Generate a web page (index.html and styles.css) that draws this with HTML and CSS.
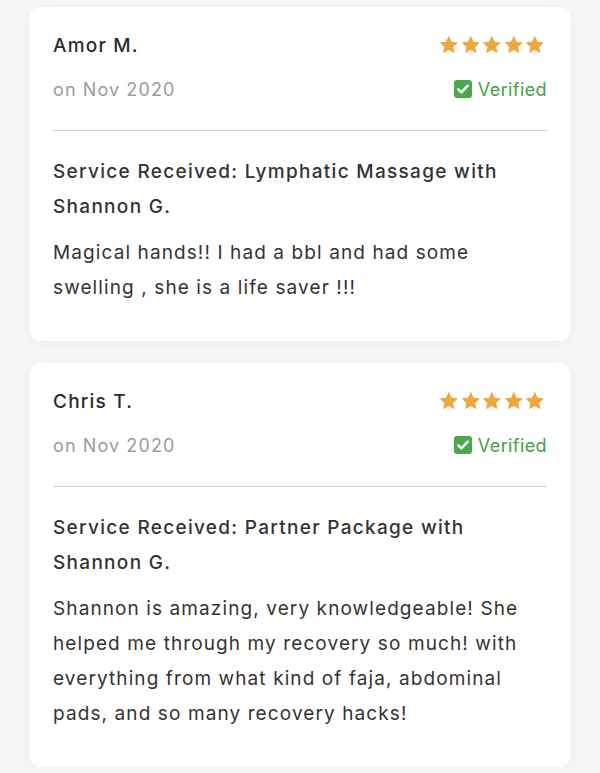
FILE: index.html
```html
<!DOCTYPE html>
<html>
<head>
<meta charset="utf-8">
<link rel="stylesheet" href="styles.css">
</head>
<body>
<div class="list">
  <div class="card">
    <div class="row">
      <div class="name">Amor M.</div>
      <div class="stars">
        <svg viewBox="0 0 24 24"><path d="M12 1.8l3.1 6.6 7.1.8-5.3 4.9 1.5 7.1L12 17.6l-6.4 3.6 1.5-7.1-5.3-4.9 7.1-.8z"/></svg>
        <svg viewBox="0 0 24 24"><path d="M12 1.8l3.1 6.6 7.1.8-5.3 4.9 1.5 7.1L12 17.6l-6.4 3.6 1.5-7.1-5.3-4.9 7.1-.8z"/></svg>
        <svg viewBox="0 0 24 24"><path d="M12 1.8l3.1 6.6 7.1.8-5.3 4.9 1.5 7.1L12 17.6l-6.4 3.6 1.5-7.1-5.3-4.9 7.1-.8z"/></svg>
        <svg viewBox="0 0 24 24"><path d="M12 1.8l3.1 6.6 7.1.8-5.3 4.9 1.5 7.1L12 17.6l-6.4 3.6 1.5-7.1-5.3-4.9 7.1-.8z"/></svg>
        <svg viewBox="0 0 24 24"><path d="M12 1.8l3.1 6.6 7.1.8-5.3 4.9 1.5 7.1L12 17.6l-6.4 3.6 1.5-7.1-5.3-4.9 7.1-.8z"/></svg>
      </div>
    </div>
    <div class="row row2">
      <div class="date">on Nov 2020</div>
      <div class="verified">
        <svg viewBox="0 0 18 18"><rect x="0" y="0" width="18" height="18" rx="3"/><path d="M4.3 9.3l3.1 3 6.3-6.6" fill="none" stroke="#fff" stroke-width="2.4" stroke-linecap="round" stroke-linejoin="round"/></svg>
        <span>Verified</span>
      </div>
    </div>
    <div class="divider"></div>
    <div class="service">Service Received: Lymphatic Massage with Shannon G.</div>
    <p class="text">Magical hands!! I had a bbl and had some swelling , she is a life saver !!!</p>
  </div>
  <div class="card">
    <div class="row">
      <div class="name">Chris T.</div>
      <div class="stars">
        <svg viewBox="0 0 24 24"><path d="M12 1.8l3.1 6.6 7.1.8-5.3 4.9 1.5 7.1L12 17.6l-6.4 3.6 1.5-7.1-5.3-4.9 7.1-.8z"/></svg>
        <svg viewBox="0 0 24 24"><path d="M12 1.8l3.1 6.6 7.1.8-5.3 4.9 1.5 7.1L12 17.6l-6.4 3.6 1.5-7.1-5.3-4.9 7.1-.8z"/></svg>
        <svg viewBox="0 0 24 24"><path d="M12 1.8l3.1 6.6 7.1.8-5.3 4.9 1.5 7.1L12 17.6l-6.4 3.6 1.5-7.1-5.3-4.9 7.1-.8z"/></svg>
        <svg viewBox="0 0 24 24"><path d="M12 1.8l3.1 6.6 7.1.8-5.3 4.9 1.5 7.1L12 17.6l-6.4 3.6 1.5-7.1-5.3-4.9 7.1-.8z"/></svg>
        <svg viewBox="0 0 24 24"><path d="M12 1.8l3.1 6.6 7.1.8-5.3 4.9 1.5 7.1L12 17.6l-6.4 3.6 1.5-7.1-5.3-4.9 7.1-.8z"/></svg>
      </div>
    </div>
    <div class="row row2">
      <div class="date">on Nov 2020</div>
      <div class="verified">
        <svg viewBox="0 0 18 18"><rect x="0" y="0" width="18" height="18" rx="3"/><path d="M4.3 9.3l3.1 3 6.3-6.6" fill="none" stroke="#fff" stroke-width="2.4" stroke-linecap="round" stroke-linejoin="round"/></svg>
        <span>Verified</span>
      </div>
    </div>
    <div class="divider"></div>
    <div class="service">Service Received: Partner Package with Shannon G.</div>
    <p class="text">Shannon is amazing, very knowledgeable! She helped me through my recovery so much! with everything from what kind of faja, abdominal pads, and so many recovery hacks!</p>
  </div>
</div>
</body>
</html>
```
FILE: styles.css
```css
html, body {
  margin: 0;
  padding: 0;
  background: #f6f7f7;
}
body {
  font-family: "Inter", "Liberation Sans", sans-serif;
  color: #333;
  letter-spacing: 1.1px;
}
.list {
  display: flex;
  flex-direction: column;
  gap: 22px;
  padding: 7px 29px 0;
}
.card {
  background: #fff;
  border-radius: 12px;
  box-shadow: 0 2px 14px rgba(0, 0, 0, 0.05);
  padding: 24px 24px 36px;
}
.row {
  display: flex;
  justify-content: space-between;
  align-items: center;
  height: 28px;
}
.row2 {
  margin-top: 16px;
}
.name {
  font-size: 19px;
  font-weight: 500;
  letter-spacing: 1.2px;
  color: #2b2b2b;
}
.stars {
  display: flex;
  margin-right: 1px;
}
.stars svg {
  width: 21.6px;
  height: 22px;
  fill: #eca740;
}
.date {
  font-size: 18px;
  color: #9b9b9b;
}
.verified {
  display: flex;
  align-items: center;
  gap: 6px;
  color: #45a049;
  font-size: 18px;
  letter-spacing: 0.4px;
}
.verified svg {
  width: 18px;
  height: 18px;
  fill: #4ba84d;
}
.divider {
  height: 1px;
  background: #cfd0d4;
  margin: 27px 0 23px;
}
.service {
  font-size: 19px;
  font-weight: 500;
  letter-spacing: 1.3px;
  line-height: 35px;
  color: #333;
}
.text {
  margin: 11px 0 0;
  font-size: 19px;
  line-height: 35px;
  color: #333;
}
```
